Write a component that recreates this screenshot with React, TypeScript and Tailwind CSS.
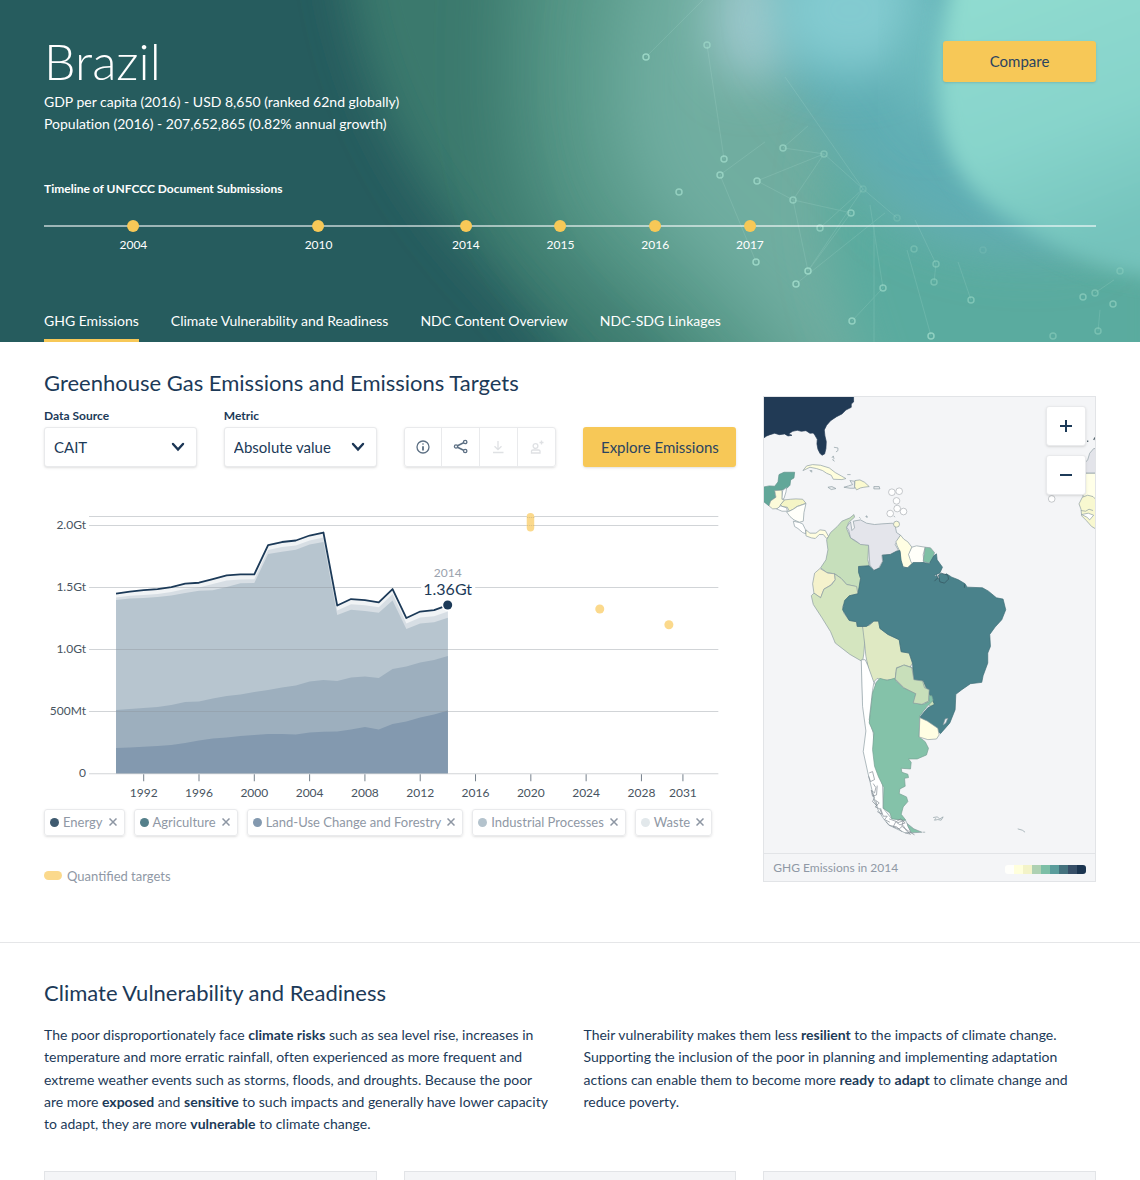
import React from "react";

const timeline = [
  { year: 2004, left: 8.5 },
  { year: 2010, left: 26.1 },
  { year: 2014, left: 40.1 },
  { year: 2015, left: 49.1 },
  { year: 2016, left: 58.1 },
  { year: 2017, left: 67.1 },
];

const tabs = [
  "GHG Emissions",
  "Climate Vulnerability and Readiness",
  "NDC Content Overview",
  "NDC-SDG Linkages",
];

const nodes: [number, number, number][] = [
  [646, 57, 0.8], [707, 45, 0.6], [724, 159, 0.7], [720, 175, 0.7], [679, 192, 0.7],
  [783, 148, 0.6], [824, 154, 0.4], [757, 181, 0.7], [793, 200, 0.6], [851, 213, 0.6],
  [863, 189, 0.2], [820, 228, 0.6], [756, 262, 0.8], [808, 271, 0.8], [796, 284, 0.8],
  [883, 288, 0.6], [852, 321, 0.7], [931, 336, 0.7], [897, 218, 0.2], [914, 249, 0.3],
  [936, 264, 0.4], [934, 282, 0.4], [971, 300, 0.5], [1083, 297, 0.5], [1095, 293, 0.4],
  [1113, 304, 0.5], [1120, 271, 0.3], [1053, 336, 0.4], [1098, 331, 0.4], [983, 250, 0.15],
];

const links: [number, number, number, number][] = [
  [646, 57, 703, 0], [707, 45, 724, 159], [757, 181, 824, 154], [824, 154, 793, 200],
  [793, 200, 851, 213], [793, 200, 808, 271], [808, 271, 863, 189], [796, 284, 885, 213],
  [808, 271, 851, 213], [720, 175, 765, 142], [720, 175, 756, 262], [783, 148, 824, 154],
  [883, 288, 852, 321], [883, 288, 870, 205], [931, 336, 907, 250], [936, 264, 915, 220],
  [936, 264, 934, 282], [971, 300, 958, 262], [783, 148, 808, 126], [874, 342, 874, 225],
  [824, 154, 863, 189], [863, 189, 897, 218], [785, 77, 863, 189], [863, 189, 820, 228],
  [1098, 331, 1100, 310], [1095, 293, 1114, 280], [757, 181, 793, 200],
];

function HeroArt() {
  return (
    <svg
      className="absolute inset-0 size-full"
      viewBox="0 0 1140 342"
      preserveAspectRatio="xMaxYMid slice"
      aria-hidden="true"
    >
      <defs>
        <filter id="b8" x="-50%" y="-50%" width="200%" height="200%">
          <feGaussianBlur stdDeviation="10" />
        </filter>
        <filter id="b24" x="-50%" y="-50%" width="200%" height="200%">
          <feGaussianBlur stdDeviation="24" />
        </filter>
        <filter id="b36" x="-50%" y="-50%" width="200%" height="200%">
          <feGaussianBlur stdDeviation="36" />
        </filter>
        <linearGradient id="orb" x1="0" y1="0" x2="0.3" y2="1">
          <stop offset="0" stopColor="#92ddd1" />
          <stop offset="0.6" stopColor="#87d4cb" />
          <stop offset="1" stopColor="#74c3bc" />
        </linearGradient>
      </defs>
      <rect width="1140" height="342" fill="#265c5e" />
      <path d="M340 -80C350 100 430 210 520 300L640 460H1300V-80Z" fill="#3b796d" filter="url(#b24)" />
      <path d="M520 -80C510 60 500 180 560 250C610 300 680 330 760 460H1300V-80Z" fill="#559686" filter="url(#b36)" />
      <path d="M640 -80C600 60 590 160 670 240C730 300 800 360 850 460H1300V-80Z" fill="#70ada0" filter="url(#b36)" />
      <path d="M840 120C880 250 960 240 1180 240V420H880C860 340 800 250 840 120Z" fill="#5aab9f" filter="url(#b24)" />
      <path d="M770 -60L770 60C810 110 850 170 900 220C960 260 1040 260 1090 250V-60Z" fill="#5fadb3" filter="url(#b24)" />
      <ellipse cx="752" cy="20" rx="42" ry="64" fill="#9bc7cb" filter="url(#b24)" />
      <ellipse cx="850" cy="10" rx="76" ry="66" fill="#83cbd0" filter="url(#b24)" />
      <ellipse cx="930" cy="60" rx="26" ry="70" fill="#70bec0" filter="url(#b24)" />
      <path
        d="M955 -30C940 30 932 90 943 135C955 180 985 205 1018 225C1060 250 1090 272 1180 280V-30Z"
        fill="url(#orb)"
        filter="url(#b8)"
      />
      <g stroke="#c3ece0" strokeWidth="1" opacity="0.15">
        {links.map(([x1, y1, x2, y2], i) => (
          <line key={i} x1={x1} y1={y1} x2={x2} y2={y2} />
        ))}
      </g>
      <g fill="none" stroke="#a5e0ce" strokeWidth="1.5">
        {nodes.map(([x, y, o], i) => (
          <circle key={i} cx={x} cy={y} r="3" opacity={o} />
        ))}
      </g>
    </svg>
  );
}

function Hero() {
  return (
    <header className="relative overflow-hidden bg-[#265c5e] px-11 text-white">
      <HeroArt />
      <div className="relative">
        <div className="flex items-start justify-between pt-9">
          <div>
            <h1 className="mb-[5px] text-[50px] font-light leading-[50px]">Brazil</h1>
            <p className="text-[14px] leading-[1.6] [font-variant-ligatures:none]">
              GDP per capita (2016) - USD 8,650 (ranked 62nd globally)
              <br />
              Population (2016) - 207,652,865 (0.82% annual growth)
            </p>
          </div>
          <button className="mt-[5px] h-[41px] w-[153px] rounded-[3px] bg-[#f7c857] text-[15px] text-[#2b4460] shadow-sm">
            Compare
          </button>
        </div>
        <h2 className="mt-11 text-[12px] font-bold leading-[18px]">
          Timeline of UNFCCC Document Submissions
        </h2>
        <div className="relative mt-[27px] h-[38px] border-t-2 border-white/55">
          {timeline.map((t) => (
            <div
              key={t.year}
              className="absolute -top-[7px] flex -translate-x-1/2 flex-col items-center"
              style={{ left: `${t.left}%` }}
            >
              <span className="size-3 rounded-full bg-[#f7c857]" />
              <span className="mt-1 text-[12px] leading-[18px]">{t.year}</span>
            </div>
          ))}
        </div>
        <nav className="mt-[47px] flex gap-8 text-[14px]">
          {tabs.map((t, i) => (
            <a
              key={t}
              href="#"
              className={
                i === 0
                  ? "border-b-3 border-[#f7c857] pb-[7px] leading-[22px]"
                  : "border-b-3 border-transparent pb-[7px] leading-[22px]"
              }
            >
              {t}
            </a>
          ))}
        </nav>
      </div>
    </header>
  );
}

function Dropdown({ id, label, value }: { id: string; label: string; value: string }) {
  return (
    <div className="min-w-0">
      <label htmlFor={id} className="block text-[12px] font-bold leading-[18px]">
        {label}
      </label>
      <div className="relative mt-0.5">
        <select
          id={id}
          className="h-10 w-full appearance-none rounded-[3px] border border-[#e9eaec] bg-white pl-[9px] text-[15px] shadow-sm"
        >
          <option>{value}</option>
        </select>
        <svg
          className="pointer-events-none absolute right-3 top-[14px] h-3 w-[14px]"
          viewBox="0 0 14 12"
          fill="none"
          stroke="#1a3554"
          strokeWidth="2.4"
          strokeLinecap="round"
        >
          <path d="M2 3L7 8.5L12 3" />
        </svg>
      </div>
    </div>
  );
}

const toolIcons = [
  {
    name: "Information",
    faded: false,
    art: (
      <>
        <circle cx="8" cy="8" r="6" />
        <path d="M8 7.3V11.4M8 4.6V5.6" strokeWidth="1.8" />
      </>
    ),
  },
  {
    name: "Share",
    faded: false,
    art: (
      <>
        <circle cx="3" cy="7.5" r="1.6" />
        <circle cx="12.2" cy="3" r="1.7" />
        <circle cx="12.2" cy="12" r="1.7" />
        <path d="M4.5 6.8L10.6 3.8M4.5 8.2L10.6 11.3" strokeWidth="1.6" />
      </>
    ),
  },
  { name: "Download", faded: true, art: <path d="M8 2V10.5M4.5 7.2L8 10.7L11.5 7.2M3 13.5H13.5" /> },
  {
    name: "Add to my data",
    faded: true,
    art: (
      <>
        <circle cx="6.5" cy="7" r="2.4" />
        <path d="M2.5 14V12Q2.5 11 4 11H9.5Q11 11 11 12V14ZM12.5 1.5V5.5M10.5 3.5H14.5" />
      </>
    ),
  },
];

const top = [593.5, 591.5, 590, 589, 587, 583.5, 582.7, 579, 575.3, 574.3, 574.3, 545, 542, 540.5, 535.5, 532.5, 605.5, 599, 600, 602.3, 589, 618, 611.5, 610, 605];
const waste = [597.5, 595.7, 595, 594, 592, 589, 587.5, 584, 580.5, 579.5, 579.3, 550, 547, 545.5, 540.5, 537.5, 610.5, 604.3, 605.3, 607.3, 594, 623.5, 617.5, 616.3, 611.5];
const industry = [600, 598.5, 598, 597, 595.5, 593, 590.7, 590.3, 587, 583.3, 583, 554, 551.7, 549.7, 544.5, 542, 615, 609.7, 611, 612.7, 600.5, 629, 623.5, 622.3, 617.7];
const landUse = [710, 709, 708, 707, 705, 702, 701.3, 698.5, 696, 694.5, 692, 690, 687.5, 685.5, 681.5, 680, 681, 677.5, 676.5, 678, 669, 666.5, 662.5, 660, 656];
const energy = [748, 747.5, 746.7, 746, 745, 743, 740.5, 738.5, 737.5, 736, 735, 734, 734, 734.5, 732.5, 731.7, 731.5, 729.3, 727, 729.3, 724, 721.5, 717.5, 714.5, 710.5];

const yearX = (year: number) => 116 + (year - 1990) * 13.82;
const linePath = (ys: number[]) => "M" + ys.map((y, i) => `${yearX(1990 + i).toFixed(1)} ${y}`).join("L");
const areaPath = (ys: number[]) => `${linePath(ys)}V773H116Z`;

function Chart() {
  return (
    <svg
      className="mt-8 block h-auto w-full font-[Lato,sans-serif]"
      viewBox="44 499 692 306"
      role="img"
      aria-label="Emissions by sector, 1990 to 2014, with targets"
    >
      <path d={areaPath(top)} fill="#f0f3f5" />
      <path d={areaPath(waste)} fill="#d7dee4" />
      <path d={areaPath(industry)} fill="#b7c5cf" />
      <path d={areaPath(landUse)} fill="#9dafbe" />
      <path d={areaPath(energy)} fill="#8399af" />
      <g stroke="#8b949c" strokeOpacity="0.4" strokeWidth="1">
        {[516.5, 525.5, 587.5, 649.5, 711.5, 773.5].map((y) => (
          <line key={y} x1="89" x2="718" y1={y} y2={y} />
        ))}
      </g>
      <path d={linePath(top)} fill="none" stroke="#1c3a58" strokeWidth="1.8" strokeLinejoin="round" />
      <g fill="#485461" fontSize="12" textAnchor="end">
        {["2.0Gt", "1.5Gt", "1.0Gt", "500Mt", "0"].map((t, i) => (
          <text key={t} x="86" y={529 + i * 62}>
            {t}
          </text>
        ))}
      </g>
      <g fill="#485461" fontSize="12" textAnchor="middle">
        {[1992, 1996, 2000, 2004, 2008, 2012, 2016, 2020, 2024, 2028, 2031].map((y) => (
          <g key={y}>
            <line x1={yearX(y)} x2={yearX(y)} y1="774" y2="781" stroke="#76818c" />
            <text x={yearX(y)} y="797">
              {y}
            </text>
          </g>
        ))}
      </g>
      <rect x="421" y="582" width="54" height="15" fill="#fff" />
      <circle cx="447.5" cy="605" r="6" fill="#fff" />
      <circle cx="447.5" cy="605" r="4.5" fill="#1c3a58" />
      <text x="447.5" y="577" fontSize="12" fill="#9aa2ad" textAnchor="middle">
        2014
      </text>
      <text x="447.5" y="595" fontSize="16" fill="#1c3a58" textAnchor="middle">
        1.36Gt
      </text>
      <g fill="#fbd98c">
        <rect x="526.5" y="513" width="7.5" height="18.5" rx="3.7" />
        <circle cx="599.5" cy="609" r="4.5" />
        <circle cx="668.6" cy="624.7" r="4.5" />
      </g>
      <path d="M527 517.5H534M527 525.5H534" stroke="#d6bd83" strokeDasharray="1 1" />
    </svg>
  );
}

const sectors = [
  ["Energy", "bg-[#3f5b70]"],
  ["Agriculture", "bg-[#55808b]"],
  ["Land-Use Change and Forestry", "bg-[#8399af]"],
  ["Industrial Processes", "bg-[#b4c3cd]"],
  ["Waste", "bg-[#e2e8eb]"],
];

const scale = [
  "bg-[#fffffb]", "bg-[#ffffdc]", "bg-[#f3f3c8]", "bg-[#aed1b2]", "bg-[#7cbfa6]",
  "bg-[#5a9d9c]", "bg-[#44727e]", "bg-[#374f68]", "bg-[#1b3550]",
];

function EmissionsMap() {
  return (
    <svg
      className="block h-auto w-full"
      viewBox="764 397 331 457"
      role="img"
      aria-label="Map of GHG emissions in South America"
      strokeLinejoin="round"
      stroke="#8a9aa0"
    >
      {/* Gulf, Caribbean and Central America */}
      <g transform="translate(760 390) scale(0.33333)" strokeWidth="2">
        <path
          d="M0 0H281V36L274 42V52L258 60L246 72L230 80L212 92L200 106L193 120L195 138L199 155L198 176L194 192L186 196L180 190L174 178L171 162L172 148L165 136L160 129L150 130L138 122L124 124L112 121L98 124L86 132L96 136L84 138L74 132L58 134L44 130L30 134L20 138L10 145L0 150Z"
          fill="#213a55"
          stroke="#213a55"
        />
        <path d="M0 288L12 291L28 288L44 289L54 276L57 254L72 247L104 247L102 264L92 270L90 286L80 296L66 300L50 302L44 312L48 322L32 333L27 348L12 336L0 322Z" fill="#62a799" stroke="#5f938b" />
        <path d="M27 348L32 333L48 322L44 302L66 301L67 328L74 330L62 344L56 356L38 357Z" fill="#fcfbda" />
        <path d="M66 328L68 302L80 292L78 306L72 326Z" fill="#fff" />
        <path d="M62 344L74 330L92 328L108 327L128 328L138 340L122 346L110 350L100 358L88 364L82 352L66 350Z" fill="#f5f5c6" />
        <path d="M50 357L62 348L80 354L82 364L66 364Z" fill="#fff" />
        <path d="M80 366L88 364L100 358L112 350L138 341L132 368L130 394L118 397L102 390L90 380Z" fill="#fffffa" />
        <path d="M100 394L118 398L128 402L136 418L138 432L128 428L114 416L104 410Z" fill="#fff" />
        <path d="M138 420L150 430L168 430L180 420L196 422L206 440L200 446L190 434L178 434L166 446L154 444L138 438Z" fill="#fffde0" />
        <path d="M129 242L140 228L158 224L182 226L208 234L226 248L244 258L258 266L246 269L220 268L214 256L200 250L188 242L170 236L150 232Z" fill="#fffedd" />
        <path d="M285 272L300 270L314 277L328 290L312 292L302 294L290 300L284 290Z" fill="#fbfad0" />
        <path d="M252 292L270 295L284 295V274L270 272L278 284L266 288ZM204 292L216 290L228 296L214 299ZM342 290H358L360 297H342Z" fill="#e9ecee" />
        <path d="M222 172L234 174V182L228 186M216 204L220 198L222 206L218 210L224 214M262 254H272M150 242L156 242L155 247Z" fill="none" />
        <path d="M298 382L302 386M320 380L323 383M402 378L405 382" fill="none" />
        {[[396, 307], [418, 304], [410, 333], [412, 356], [391, 371], [431, 365]].map(([x, y]) => (
          <circle key={`${x}-${y}`} cx={x} cy={y} r="10" fill="#fff" stroke="#a9adb2" />
        ))}
      </g>
      {/* West African coast */}
      <g transform="translate(930 390) scale(0.33333)" strokeWidth="2" fill="#ffffe8">
        <path d="M462 222L474 210L480 190L492 176H510V250H462Z" fill="#e3e4ea" />
        <path d="M462 250H510V340H486L460 322Z" />
        <path d="M448 342L458 322L474 316L490 320L510 340V424L486 410L470 392L456 378L454 358Z" fill="#f8f8d0" />
        <path d="M456 374L476 370L492 376L480 390L472 382Z" fill="#fff" />
        <path d="M454 362L468 364L478 358L490 362" fill="none" />
        <path d="M472 154H476M492 150L497 142" stroke="#596870" strokeWidth="4" />
        <circle cx="366" cy="327" r="10" fill="#fff" stroke="#a9adb2" />
      </g>
      {/* Northern South America */}
      <g transform="translate(800 510) scale(0.33333)" strokeWidth="2">
        <path d="M188 350L196 360L204 470L232 540L214 570L188 570L186 454Z" fill="#fff" />
        <path d="M62 174L78 150L84 120L80 90L92 68L112 50L126 34L150 24L162 14L164 22L146 38L140 56L152 84L166 94L182 102L206 106L204 150L208 168L176 170V182L182 206L176 252L166 230L140 224L124 206L104 192L80 188Z" fill="#c6dfbb" />
        <path d="M146 60L140 52L152 36L156 62L164 54L160 34L182 30L200 40L224 44L246 42L278 40L286 48L290 68L302 76L294 92L286 104L296 122L270 134L246 136L248 154L236 176L222 182L210 166L206 106L182 104L166 92L152 84Z" fill="#e4e5eb" />
        <path d="M302 76L312 88L324 96L336 112L328 134L338 160L322 174L308 170L302 150V128L292 108L288 96Z" fill="#fffee3" />
        <path d="M336 112L350 108L376 112L370 134L372 158L348 164L334 158L326 134Z" fill="#fffffa" />
        <path d="M376 112L392 114L404 128L398 150L386 160L370 154Z" fill="#7fc0a5" />
        <path d="M44 190L60 176L84 190L104 192L106 210L92 226L72 238L62 264L42 250L38 222Z" fill="#f5f2cc" />
        <path d="M104 192L124 206L140 224L170 230L174 252L148 258L128 290L132 310L148 332L170 336L172 350L188 350L196 372L192 430L188 456L150 434L106 400L92 366L66 324L40 284L34 258L42 250L62 264L72 238L94 226L106 210Z" fill="#d4e5bf" />
        <path d="M188 350L210 346L222 334L236 334L240 356L264 374L298 390L304 426L328 430L338 460L330 474L292 474L286 508L250 512L232 506L220 518L206 478L198 440L194 400Z" fill="#dfe9c3" />
        <path d="M286 508L290 474L314 466L338 474L342 510L370 512L384 548L400 560L404 584L396 592L370 574L330 550Z" fill="#c8dfba" />
        <path
          d="M176 170L208 168L222 182L240 174L250 154L248 136L272 134L290 124L300 122L304 152L310 172L324 174L340 158L372 158L388 162L402 138L410 132L412 150L428 172L420 190L404 196L416 206L440 192L456 202L476 210L496 222L502 232L548 234L566 244L590 264L610 268L618 300L606 330L586 352L570 374L572 410L564 430L564 460L550 498L546 518L512 522L486 540L468 554L466 600L450 640L422 672L400 650L360 622L384 594L404 584L386 548L370 512H342L338 460L328 430L304 426L298 390L264 374L240 356L236 334L222 334L200 350H172L170 336L148 332L128 300L134 272L148 258L174 252L182 206L176 188Z"
          fill="#4a828b"
          stroke="#3c6d75"
        />
        <path d="M416 196L424 190L444 196L446 208L434 220L420 216ZM404 214L414 204L410 194M494 234V224" fill="#4a828b" stroke="#33525c" />
        <circle cx="290" cy="43" r="9" fill="#fbfad8" />
        <circle cx="200" cy="20" r="2" fill="none" />
      </g>
      {/* Southern cone */}
      <g transform="translate(840 660) scale(0.33333)" strokeWidth="2">
        <path d="M64 0H76L84 18L102 68L98 92L88 180L100 220L106 310L128 376L130 446L154 476L198 484L214 518L196 520L170 508L146 496L130 476L116 454L104 424L96 390L84 340L70 276L78 214L68 140Z" fill="#fff" />
        <path
          d="M109 68L120 56L142 62L164 56L168 64L190 84L228 102L222 130L250 134L268 126L266 108L276 108L280 122L262 140L240 168L238 232L256 246L266 266L260 286L232 298H206L214 308L212 328L184 326L186 338L204 344L206 354L194 356L196 380L180 388L178 402L200 412L204 426L190 442L184 464L198 482L156 478L150 460L130 446L132 384L116 352L104 320L98 270L102 220L88 190L98 100Z"
          fill="#84c2a9"
          stroke="#759f93"
        />
        <path d="M166 58L170 26L192 16L216 24L222 60L248 64L254 84L268 90L266 124L246 134L220 130L228 102L192 84Z" fill="#c8dfba" />
        <path d="M240 174L262 184L294 206L298 226L290 238L264 240L238 232Z" fill="#fffee3" />
        <path d="M202 492L222 508L246 518L214 520L204 500Z" fill="#84c2a9" />
        <path d="M248 518H256" fill="none" />
        <path d="M310 196L316 178L324 176L318 190Z" fill="#f4f5f7" />
        <path
          d="M88 340L98 336L104 360L92 366L86 350M100 372L108 384L104 400L94 392L98 410L110 406L112 378M104 420L118 430L106 442L120 448L126 464L112 456M122 446L130 470L142 470L134 480L150 488M148 478L170 486L182 478L196 490L180 496L168 486L160 502L178 508L190 498L200 514L212 524L196 520M188 502L208 516L224 526M98 400L104 414L98 426L112 440L108 424M138 486L150 498L170 502L186 516M172 490L190 484L186 500"
          fill="none"
          stroke="#7d8690"
        />
        <path d="M280 474L292 472L300 478L310 472L304 482L294 480L284 482L288 476M534 508L548 512L556 518" fill="none" />
      </g>
    </svg>
  );
}

function Emissions() {
  return (
    <section className="grid grid-cols-3 gap-x-[27px] border-b border-[#e5e6e8] px-11 pb-14 pt-[27px]">
      <div className="col-span-2">
        <h2 className="text-[22px] leading-7">Greenhouse Gas Emissions and Emissions Targets</h2>
        <div className="mt-[10px] grid grid-cols-4 items-end gap-x-[27px]">
          <Dropdown id="source" label="Data Source" value="CAIT" />
          <Dropdown id="metric" label="Metric" value="Absolute value" />
          <div className="grid h-10 grid-cols-4 divide-x divide-[#e9eaec] rounded-[3px] border border-[#e9eaec] shadow-sm">
            {toolIcons.map((t) => (
              <button key={t.name} aria-label={t.name} className="flex items-center justify-center">
                <svg
                  className="size-4"
                  viewBox="0 0 16 16"
                  fill="none"
                  stroke={t.faded ? "#dfe1e4" : "#5c6f83"}
                  strokeWidth="1.3"
                >
                  {t.art}
                </svg>
              </button>
            ))}
          </div>
          <button className="h-10 rounded-[3px] bg-[#f7c857] text-[15px] text-[#2b4460] shadow-sm">
            Explore Emissions
          </button>
        </div>
        <Chart />
        <ul className="mt-1 flex flex-wrap gap-[9px] text-[13px] text-[#8f98a5]">
          {sectors.map(([name, dot]) => (
            <li
              key={name}
              className="flex h-[27px] items-center rounded-[3px] border border-[#e9eaec] px-[5px] shadow-sm"
            >
              <span className={`mr-1 size-[9px] rounded-full ${dot}`} />
              {name}
              <button aria-label={`Remove ${name}`} className="ml-1 p-0.5">
                <svg className="size-2" viewBox="0 0 8 8" stroke="#8d96a3" strokeWidth="1.5">
                  <path d="M0.5 0.5L7.5 7.5M7.5 0.5L0.5 7.5" />
                </svg>
              </button>
            </li>
          ))}
        </ul>
        <p className="mt-[30px] flex items-center gap-[5px] text-[13px] leading-5 text-[#8f98a5]">
          <span className="h-[9px] w-[18px] rounded-full bg-[#fbd98c]" />
          Quantified targets
        </p>
      </div>
      <div className="relative mt-[27px] self-start border border-[#e2e4e7] bg-[#f4f5f7]">
        <EmissionsMap />
        <div className="absolute right-[9px] top-[9px] flex flex-col gap-[9px]">
          <button aria-label="Zoom in" className="flex size-10 items-center justify-center rounded-[3px] border border-[#e9eaec] bg-white shadow-sm">
            <svg className="size-[14px]" viewBox="0 0 14 14" stroke="#1c3a58" strokeWidth="2">
              <path d="M1 7H13M7 1V13" />
            </svg>
          </button>
          <button aria-label="Zoom out" className="flex size-10 items-center justify-center rounded-[3px] border border-[#e9eaec] bg-white shadow-sm">
            <svg className="size-[14px]" viewBox="0 0 14 14" stroke="#1c3a58" strokeWidth="2">
              <path d="M1 7H13" />
            </svg>
          </button>
        </div>
        <div className="flex h-7 items-center justify-between border-t border-[#e2e4e7] px-[9px]">
          <span className="text-[12px] text-[#8f98a5]">GHG Emissions in 2014</span>
          <span className="mt-1 flex h-[9px] w-[81px] overflow-hidden rounded-[3px]">
            {scale.map((c) => (
              <span key={c} className={`flex-1 ${c}`} />
            ))}
          </span>
        </div>
      </div>
    </section>
  );
}

function Vulnerability() {
  return (
    <section className="px-11 pt-9">
      <h2 className="text-[22px] leading-7">Climate Vulnerability and Readiness</h2>
      <div className="mt-[17px] grid grid-cols-2 gap-x-[27px] text-[14px] leading-[1.6] [font-variant-ligatures:none]">
        <p>
          The poor disproportionately face <b>climate risks</b> such as sea level rise, increases in
          <br />
          temperature and more erratic rainfall, often experienced as more frequent and
          <br />
          extreme weather events such as storms, floods, and droughts. Because the poor
          <br />
          are more <b>exposed</b> and <b>sensitive</b> to such impacts and generally have lower
          capacity
          <br />
          to adapt, they are more <b>vulnerable</b> to climate change.
        </p>
        <p>
          Their vulnerability makes them less <b>resilient</b> to the impacts of climate change.
          <br />
          Supporting the inclusion of the poor in planning and implementing adaptation
          <br />
          actions can enable them to become more <b>ready</b> to <b>adapt</b> to climate change and
          <br />
          reduce poverty.
        </p>
      </div>
      <div className="mt-[35px] grid grid-cols-3 gap-x-[27px]">
        <div className="h-60 border border-[#e2e4e7] bg-[#f4f5f7]" />
        <div className="h-60 border border-[#e2e4e7] bg-[#f4f5f7]" />
        <div className="h-60 border border-[#e2e4e7] bg-[#f4f5f7]" />
      </div>
    </section>
  );
}

export default function App() {
  return (
    <div className="bg-white font-[Lato,sans-serif] text-[#1c3a58]">
      <Hero />
      <main>
        <Emissions />
        <Vulnerability />
      </main>
    </div>
  );
}
